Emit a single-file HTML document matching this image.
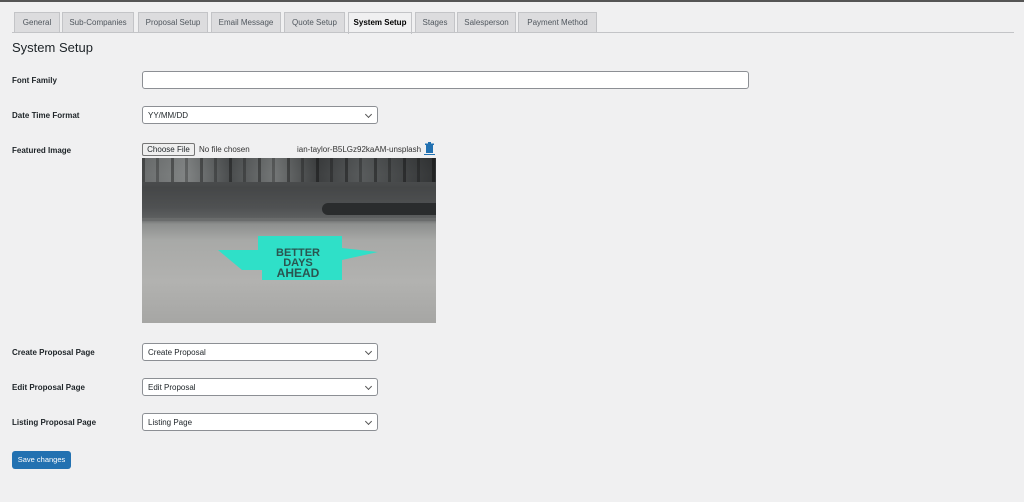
<!DOCTYPE html>
<html><head><style>
*{box-sizing:border-box;margin:0;padding:0}
body{width:1024px;height:502px;background:#f0f0f1;font-family:"Liberation Sans",sans-serif;color:#1d2327;position:relative;overflow:hidden;font-size:8px}
.top{position:absolute;left:0;top:0;width:1024px;height:2px;background:#555}
.tab{position:absolute;top:12px;height:21px;background:#dcdcde;border:1px solid #c3c4c7;border-bottom:none;font-size:8px;color:#50575e;line-height:20px;text-align:center}
.tab.a{background:#f0f0f1;color:#000;font-weight:bold;height:22px}
.line{position:absolute;left:12px;top:32px;width:1002px;height:1px;background:#c3c4c7}
h1{position:absolute;left:12px;top:40px;font-size:13px;font-weight:normal}
.lbl{position:absolute;left:12px;font-size:8px;font-weight:bold;color:#1d2327}
.in{position:absolute;left:142px;background:#fff;border:1px solid #8c8f94;border-radius:3px;font-size:8px;line-height:18px;padding-left:5px}
.sel{width:236px;height:18px}
.sel:after{content:"";position:absolute;right:6px;top:5px;width:4px;height:4px;border-right:1px solid #555;border-bottom:1px solid #555;transform:rotate(45deg)}
.btn{position:absolute;left:12px;top:451px;width:59px;height:18px;background:#2271b1;border-radius:3px;color:#fff;font-size:7.5px;text-align:center;line-height:18px}
</style></head><body>
<div class="top"></div>
<div class="tab" style="left:14px;width:46px">General</div>
<div class="tab" style="left:62px;width:72px">Sub-Companies</div>
<div class="tab" style="left:138px;width:70px">Proposal Setup</div>
<div class="tab" style="left:211px;width:70px">Email Message</div>
<div class="tab" style="left:284px;width:61px">Quote Setup</div>
<div class="tab a" style="left:348px;width:64px">System Setup</div>
<div class="tab" style="left:415px;width:40px">Stages</div>
<div class="tab" style="left:457px;width:59px">Salesperson</div>
<div class="tab" style="left:518px;width:79px">Payment Method</div>
<div class="line"></div>
<h1>System Setup</h1>

<div class="lbl" style="top:76px">Font Family</div>
<div class="in" style="top:71px;width:607px;height:18px"></div>

<div class="lbl" style="top:111px">Date Time Format</div>
<div class="in sel" style="top:106px">YY/MM/DD</div>

<div class="lbl" style="top:146px">Featured Image</div>
<div style="position:absolute;left:142px;top:143px;width:53px;height:13px;border:1px solid #767676;background:#efefef;border-radius:2px;font-size:8px;text-align:center;line-height:11px">Choose File</div>
<div style="position:absolute;left:199px;top:145px;font-size:8px;color:#333">No file chosen</div>
<div style="position:absolute;left:297px;top:145px;font-size:8px;color:#333">ian-taylor-B5LGz92kaAM-unsplash</div>
<svg style="position:absolute;left:424px;top:142px" width="11" height="13" viewBox="0 0 11 13"><rect x="2" y="3" width="7" height="8" fill="#2271b1"/><rect x="1" y="1.5" width="9" height="1.5" fill="#2271b1"/><rect x="4" y="0" width="3" height="1.5" fill="#2271b1"/><rect x="0" y="12" width="11" height="1" fill="#2271b1"/></svg>
<div style="position:absolute;left:142px;top:158px;width:294px;height:165px;background:linear-gradient(180deg,#2e3031 0%,#505253 10%,#454748 18%,#4f5152 30%,#5c5e5f 36%,#8d8f8e 40%,#a8a9a7 50%,#b2b2b0 75%,#a6a6a4 100%);overflow:hidden">
<div style="position:absolute;left:0;top:0;width:294px;height:24px;background:linear-gradient(90deg,#6f7272 0,#8a8d8d 15%,#4a4d4e 30%,#7a7d7d 45%,#3a3c3d 60%,#5a5d5e 75%,#2e3031 100%);opacity:.85"></div>
<div style="position:absolute;left:0;top:0;width:294px;height:24px;background:repeating-linear-gradient(90deg,rgba(0,0,0,.35) 0 3px,transparent 3px 14px,rgba(0,0,0,.25) 14px 17px,transparent 17px 29px)"></div>
<div style="position:absolute;left:180px;top:45px;width:114px;height:12px;background:#2a2c2d;border-radius:6px 0 0 6px"></div>
<div style="position:absolute;left:0;top:60px;width:294px;height:3px;background:#6a6c6c"></div>
<svg style="position:absolute;left:76px;top:78px" width="160" height="44" viewBox="0 0 160 44"><polygon points="0,14 40,14 40,0 124,0 124,12 160,16 124,24 124,44 44,44 44,34 24,34" fill="#2fe0c8"/><text x="80" y="20" font-size="11" font-weight="bold" fill="#2a5550" text-anchor="middle" font-family="Liberation Sans">BETTER</text><text x="80" y="30" font-size="11" font-weight="bold" fill="#2a5550" text-anchor="middle" font-family="Liberation Sans">DAYS</text><text x="80" y="41" font-size="12" font-weight="bold" fill="#2a5550" text-anchor="middle" font-family="Liberation Sans">AHEAD</text></svg>
</div>

<div class="lbl" style="top:348px">Create Proposal Page</div>
<div class="in sel" style="top:343px;line-height:17px">Create Proposal</div>
<div class="lbl" style="top:383px">Edit Proposal Page</div>
<div class="in sel" style="top:378px;line-height:17px">Edit Proposal</div>
<div class="lbl" style="top:418px">Listing Proposal Page</div>
<div class="in sel" style="top:413px;line-height:17px">Listing Page</div>
<div class="btn">Save changes</div>
</body></html>
